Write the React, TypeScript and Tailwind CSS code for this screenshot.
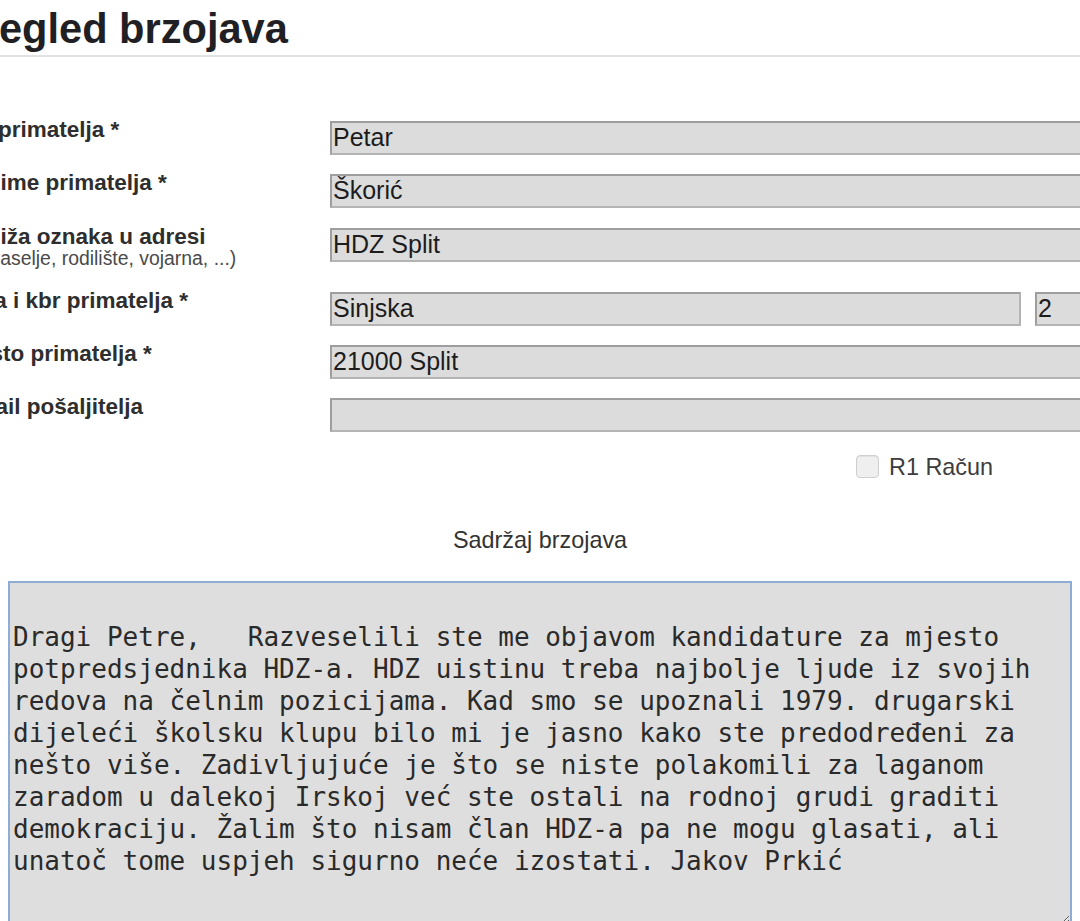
import React from 'react';

const sans = { fontFamily: '"Liberation Sans", Arial, sans-serif' };

const poruka = [
  '',
  'Dragi Petre,   Razveselili ste me objavom kandidature za mjesto',
  'potpredsjednika HDZ-a. HDZ uistinu treba najbolje ljude iz svojih',
  'redova na čelnim pozicijama. Kad smo se upoznali 1979. drugarski',
  'dijeleći školsku klupu bilo mi je jasno kako ste predodređeni za',
  'nešto više. Zadivljujuće je što se niste polakomili za laganom',
  'zaradom u dalekoj Irskoj već ste ostali na rodnoj grudi graditi',
  'demokraciju. Žalim što nisam član HDZ-a pa ne mogu glasati, ali',
  'unatoč tome uspjeh sigurno neće izostati. Jakov Prkić',
].join('\n');

const Polje = ({ value, className = '' }: { value: string; className?: string }) => (
  <input
    readOnly
    value={value}
    className={`shrink-0 h-[34px] bg-[#dcdcdc] border-2 border-[#9e9e9e] border-b-[#b4b4b4] border-r-[#b4b4b4] px-[1px] text-[25px] text-[#1c1c1c] outline-none ${className}`}
  />
);

const Red = ({ label, children, className = '' }: { label: React.ReactNode; children: React.ReactNode; className?: string }) => (
  <div className={`grid grid-cols-[375px_1fr] h-[34px] ${className}`}>
    <div className="-mt-[4px] -ml-[2px] text-[22.5px] leading-[26px] font-bold text-[#2e2e2e] whitespace-nowrap">{label}</div>
    <div className="flex w-[800px]">{children}</div>
  </div>
);

export default function App() {
  return (
    <div className="w-[1080px] h-[921px] overflow-hidden bg-white" style={sans}>
      <div className="-ml-[45px] w-[1125px]">
        <h1 className="pt-[5px] pb-[2px] text-[41.6px] leading-[48px] font-bold text-[#1f1f24] border-b-2 border-[#e2e2e2]">
          Pregled brzojava
        </h1>

        <Red label="Ime primatelja *" className="mt-[64px]">
          <Polje value="Petar" className="w-[760px]" />
        </Red>
        <Red label="Prezime primatelja *" className="mt-[19px]">
          <Polje value="Škorić" className="w-[760px]" />
        </Red>
        <Red
          className="mt-[20px]"
          label={
            <div className="pl-[25px]">
              Bliža oznaka u adresi
              <div className="-mt-[1px] pl-[5px] text-[19.4px] leading-[18px] font-normal text-[#4a4a4a]">
                (naselje, rodilište, vojarna, ...)
              </div>
            </div>
          }
        >
          <Polje value="HDZ Split" className="w-[760px]" />
        </Red>
        <Red label="Ulica i kbr primatelja *" className="mt-[30px]">
          <Polje value="Sinjska" className="w-[691px]" />
          <Polje value="2" className="ml-[14px] w-[60px]" />
        </Red>
        <Red label="Mjesto primatelja *" className="mt-[19px]">
          <Polje value="21000 Split" className="w-[760px]" />
        </Red>
        <Red label="E-mail pošaljitelja" className="mt-[19px]">
          <Polje value="" className="w-[760px]" />
        </Red>

        <div className="mt-[23px] ml-[901px] flex items-center h-[23px]">
          <span className="w-[23px] h-[23px] rounded-[4px] border border-[#cfcfcf] bg-[#efefef] shadow-[inset_0_1px_1px_rgba(0,0,0,0.06)]" />
          <span className="ml-[10px] text-[23.4px] leading-[26px] text-[#3d3d3d]">R1 Račun</span>
        </div>
      </div>

      <div className="mt-[48px] text-center text-[23.4px] leading-[28px] text-[#333]">Sadržaj brzojava</div>

      <textarea
        readOnly
        value={poruka}
        wrap="off"
        className="block mt-[27px] ml-[8px] w-[1064px] h-[345px] bg-[#dedede] border-2 border-[#8eacd4] pt-[6px] pl-[3px] text-[26px] leading-[32px] text-[#2a2a2a] outline-none overflow-hidden whitespace-pre"
        style={{ fontFamily: '"DejaVu Sans Mono", "Liberation Mono", monospace' }}
      />
    </div>
  );
}
